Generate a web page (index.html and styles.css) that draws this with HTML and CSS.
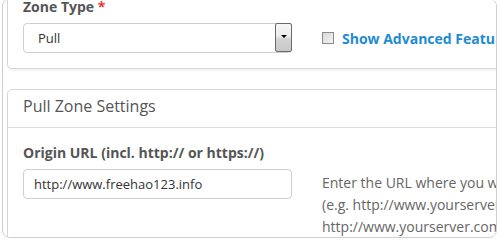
FILE: index.html
```html
<!DOCTYPE html>
<html lang="en">
<head>
    <meta charset="UTF-8">
    <meta name="viewport" content="width=device-width, initial-scale=1.0">
    <title>Add Pull Zone</title>
    <link rel="stylesheet" href="styles.css">
</head>
<body>
    <div class="zone_frame">
        <section class="zone_panel zone_panel_type">
            <div class="zone_panel_body zone_row">
                <div class="zone_col_left">
                    <label class="zone_label">Zone Type <span class="zone_req">*</span></label>
                    <div class="zone_select">
                        <span class="zone_select_value">Pull</span>
                        <span class="zone_select_btn"><span class="zone_select_arrow"></span></span>
                    </div>
                </div>
                <div class="zone_check_row">
                    <span class="zone_checkbox"></span>
                    <span class="zone_check_label">Show Advanced Features</span>
                </div>
            </div>
        </section>

        <section class="zone_panel zone_panel_settings">
            <div class="zone_panel_heading">Pull Zone Settings</div>
            <div class="zone_panel_body zone_row">
                <div class="zone_col_left">
                    <label class="zone_label">Origin URL (incl. http:// or https://)</label>
                    <div class="zone_input">http://www.freehao123.info</div>
                </div>
                <p class="zone_help">
                    Enter the URL where you want to pull your files from<br>
                    (e.g. http://www.yourserver.com or<br>
                    http://www.yourserver.com/images)
                </p>
            </div>
        </section>
    </div>
</body>
</html>
```

FILE: styles.css
```css
* {
    margin: 0;
    padding: 0;
    box-sizing: border-box;
}

body {
    font-family: "Open Sans", "Liberation Sans", sans-serif;
    background: #fff;
    color: #555;
    overflow: hidden;
}

.zone_frame {
    width: 495px;
    height: 240px;
    margin: -2px 0 0 2px;
    border: 1px solid #cdcddf;
    border-radius: 8px;
    overflow: hidden;
    padding-left: 4px;
}

.zone_panel {
    width: 640px;
    background: #fff;
    border: 1px solid #d6d6d6;
    border-radius: 5px;
    box-shadow: 0 2px 2px rgba(0,0,0,0.05);
}

.zone_panel_type {
    margin-top: -18px;
}

.zone_panel_settings {
    margin-top: 20px;
}

.zone_panel_heading {
    padding: 5px 15px 10px;
    font-size: 16px;
    line-height: 22px;
    color: #555;
    border-bottom: 1px solid #dcdcdc;
}

.zone_panel_body {
    padding: 15px;
}

.zone_row {
    display: grid;
    grid-template-columns: 269px 1fr;
    column-gap: 30px;
}

.zone_label {
    display: block;
    font-size: 14px;
    line-height: 20px;
    font-weight: 700;
    color: #555;
    margin-bottom: 6px;
}

.zone_req {
    color: #e33;
}

.zone_select,
.zone_input {
    height: 30px;
    border: 1px solid #cfcfcf;
    border-radius: 4px;
    font-size: 13px;
    color: #333;
    display: flex;
    align-items: center;
}

.zone_select_value {
    padding-left: 14px;
    flex: 1;
}

.zone_input {
    padding-left: 10px;
}

.zone_select_btn {
    align-self: flex-start;
    width: 17px;
    height: 29px;
    margin: -1px -1px 0 0;
    border: 1px solid #6a6a6a;
    border-radius: 2px;
    background: linear-gradient(to bottom, #f6f6f6 0%, #ececec 45%, #d3d3d3 55%, #c9c9c9 100%);
    display: flex;
    align-items: center;
    justify-content: center;
}

.zone_select_arrow {
    width: 0;
    height: 0;
    border-left: 3px solid transparent;
    border-right: 3px solid transparent;
    border-top: 3px solid #000;
    margin-top: -2px;
}

.zone_check_row {
    align-self: end;
    height: 30px;
    display: flex;
    align-items: center;
    white-space: nowrap;
}

.zone_checkbox {
    width: 12px;
    height: 12px;
    border: 1px solid #8c8c8c;
    background: linear-gradient(135deg, #d8d8d8 0%, #f4f4f4 100%);
    margin-right: 8px;
}

.zone_check_label {
    font-size: 14px;
    font-weight: 700;
    color: #1e8bd3;
}

.zone_help {
    margin-top: 29px;
    font-size: 14px;
    line-height: 22px;
    color: #666;
    white-space: nowrap;
}
```
